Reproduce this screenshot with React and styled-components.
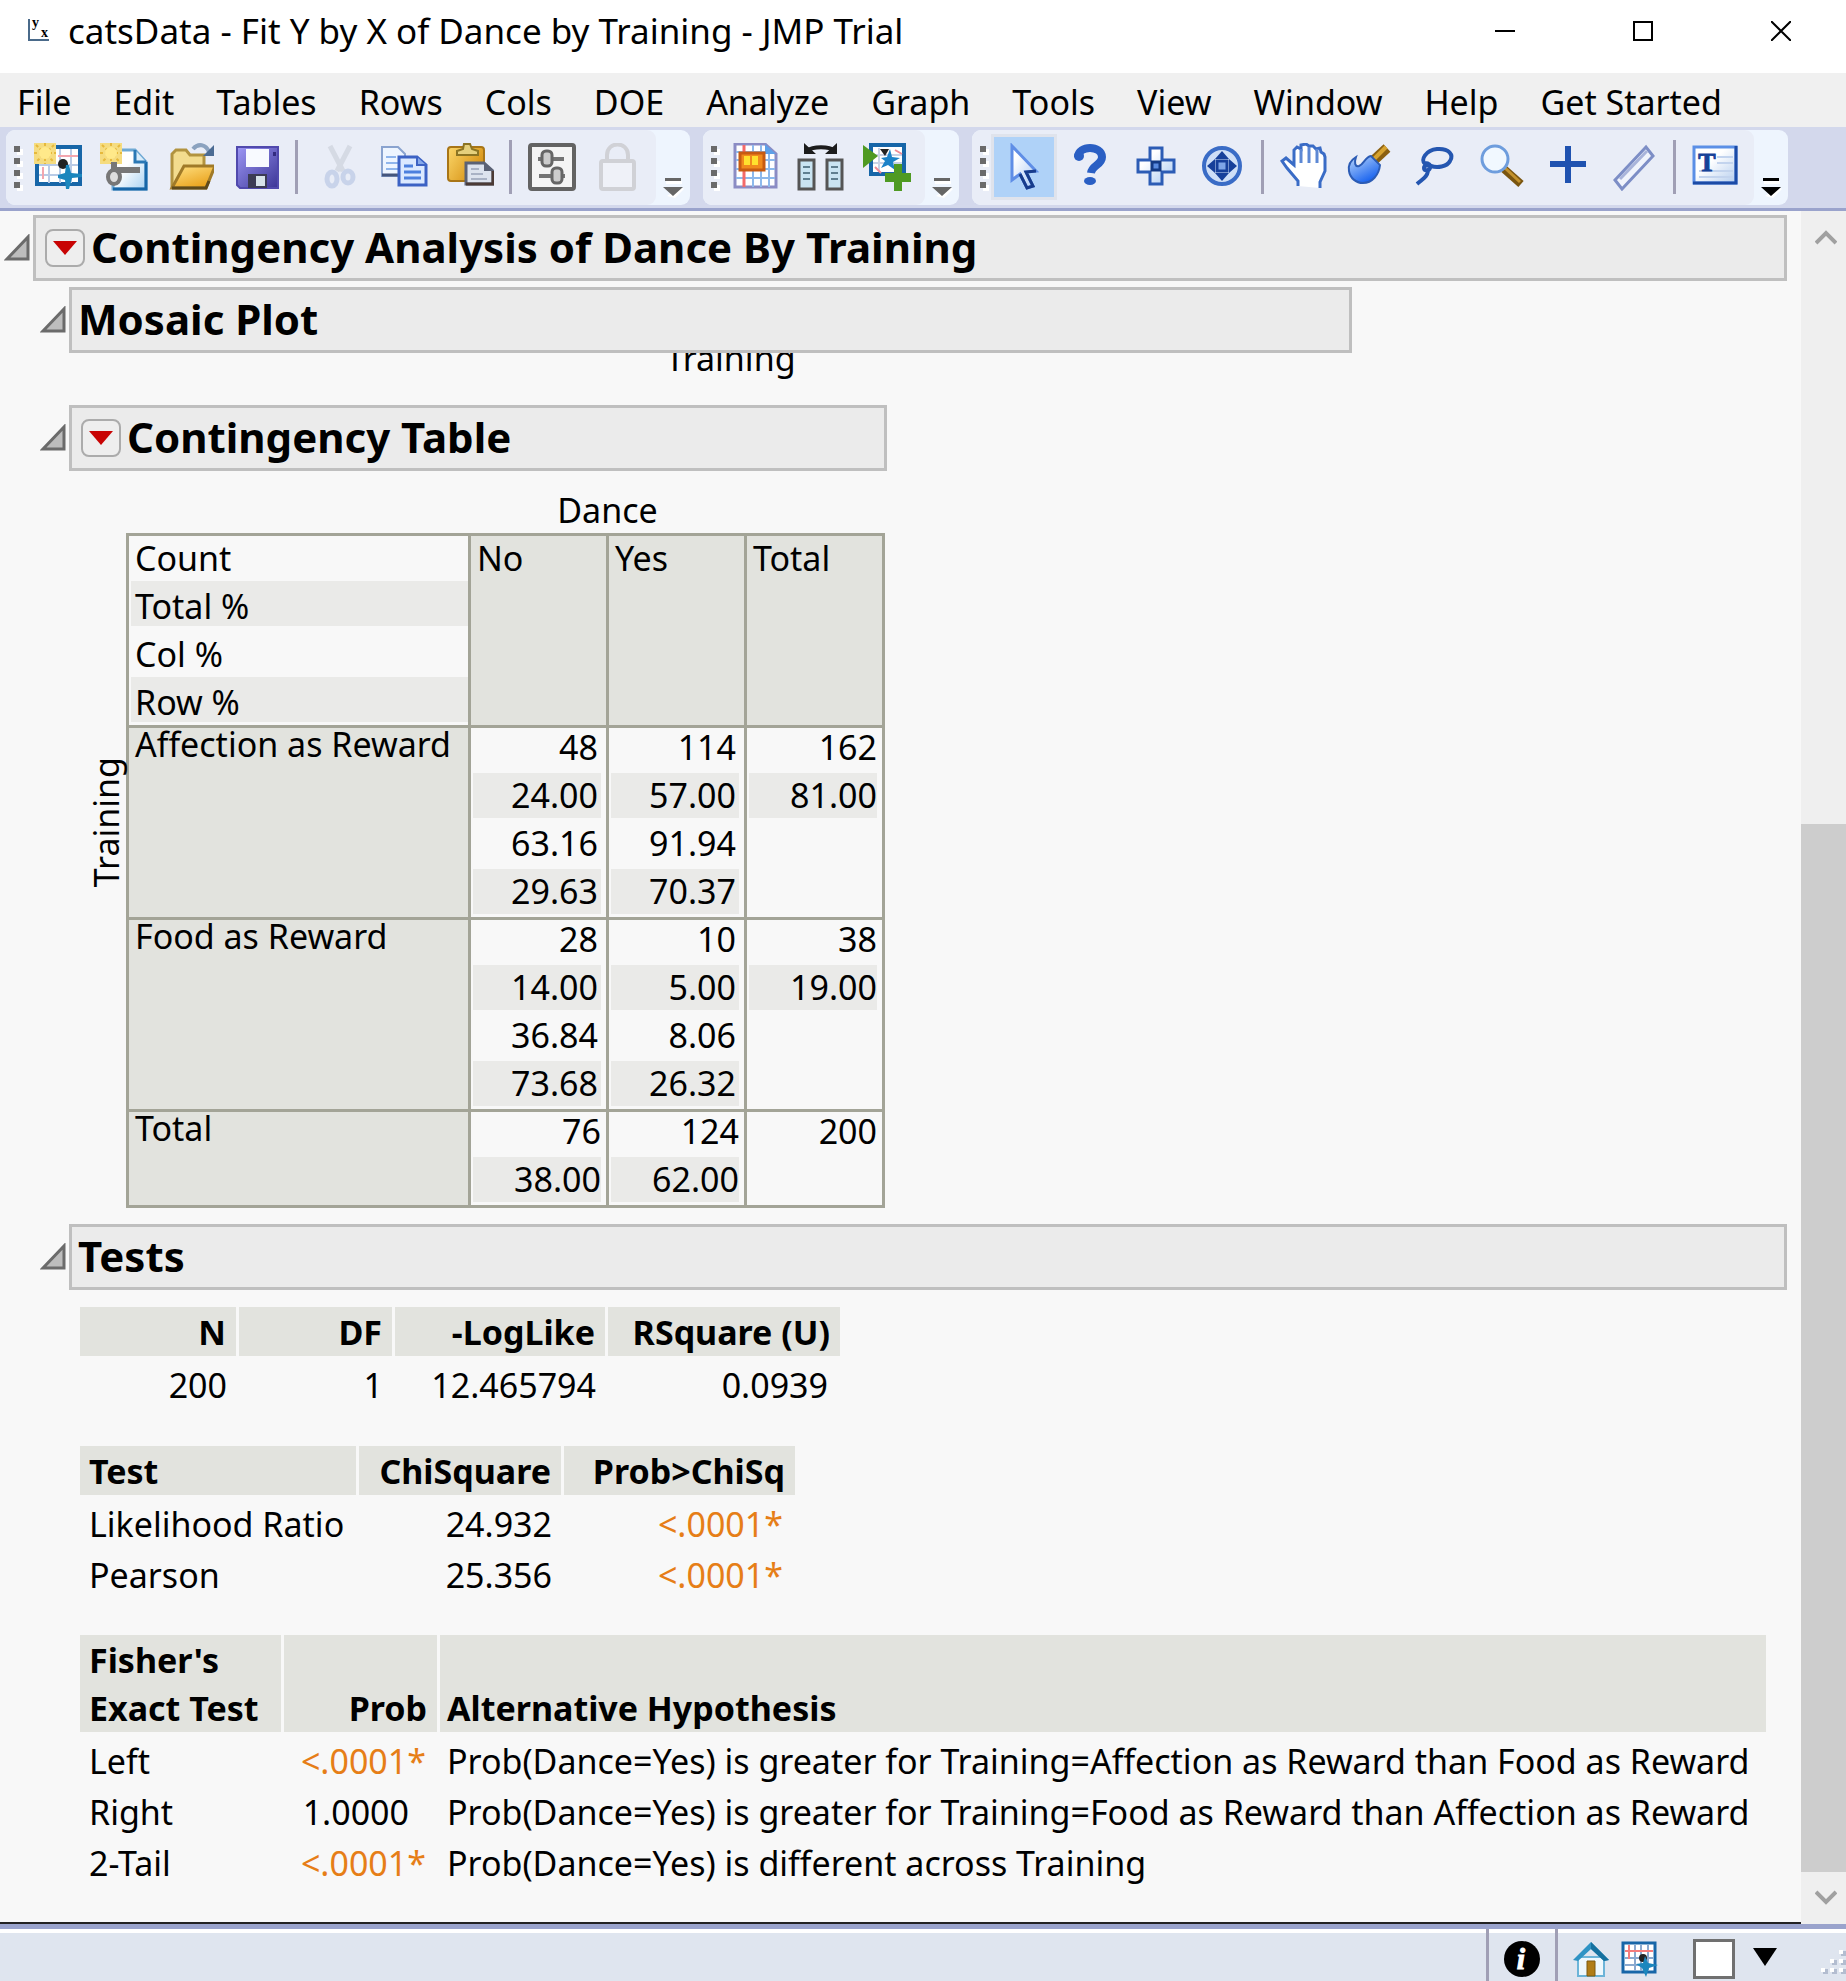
import React from "react";
import styled, { createGlobalStyle, css } from "styled-components";

const GlobalStyle = createGlobalStyle`
  *, *::before, *::after { box-sizing: border-box; }
  body { margin: 0; background: #f8f8f8; }
  button { font: inherit; color: inherit; padding: 0; border: 0; background: none; }
`;

const Window = styled.div`
  display: flex;
  flex-direction: column;
  height: 100vh;
  overflow: hidden;
  font-family: "Noto Sans", "Open Sans", sans-serif;
  font-size: 34px;
  color: #000;
  background: #f8f8f8;
`;

/* ---------- title bar ---------- */

const TitleBar = styled.header`
  display: flex;
  align-items: center;
  height: 73px;
  flex: none;
  padding: 0 0 12px 26px;
  background: #fff;
`;

const AppTitle = styled.h1`
  flex: 1;
  margin: 0 0 0 17px;
  font-size: 35px;
  line-height: 46px;
  font-weight: 400;
  white-space: nowrap;
`;

const WindowControls = styled.div`
  display: flex;
  gap: 8px;
`;

const WindowButton = styled.button`
  display: flex;
  align-items: center;
  justify-content: center;
  width: 130px;
  height: 58px;
`;

/* ---------- menu bar ---------- */

const MenuBar = styled.nav`
  display: flex;
  align-items: center;
  height: 54px;
  flex: none;
  padding-top: 4px;
  background: #f0f0f0;
`;

const MenuItem = styled.button`
  padding: 0 25px 0 17px;
  font-size: 34px;
  line-height: 46px;
  white-space: nowrap;
`;

/* ---------- toolbars ---------- */

const ToolBars = styled.div`
  display: flex;
  gap: 13px;
  height: 84px;
  flex: none;
  padding: 3px 6px;
  background: #d3d8ec;
  border-bottom: 3px solid #9aa3cc;
`;

const ToolGroup = styled.div`
  display: flex;
  height: 75px;
  overflow: hidden;
  border-radius: 9px;
  background: #eef5fe;
`;

const ToolStrip = styled.div`
  display: flex;
  align-items: center;
  padding-right: 5px;
  padding-bottom: 2px;
  border-radius: 0 9px 9px 0;
  background: #e9edf7;
`;

const Grip = styled.div`
  display: grid;
  gap: 6px;
  width: 19px;
  padding-left: 8px;
  span {
    width: 6px;
    height: 6px;
    background: #6a6a6a;
    box-shadow: 3px 3px 0 #fff;
  }
`;

const ToolButton = styled.button`
  display: flex;
  align-items: center;
  justify-content: center;
  width: 66px;
  height: 66px;
  ${(p) =>
    p.$active &&
    css`
      background: #afd2f8;
      border: 3px solid #dfe3ec;
    `}
  svg { flex: none; }
`;

const ToolDivider = styled.div`
  width: 3px;
  height: 54px;
  margin: 0 7px 0 6px;
  background: #a09fb5;
`;

const Overflow = styled.button`
  display: flex;
  align-items: flex-end;
  justify-content: center;
  width: 34px;
  height: 75px;
  padding-bottom: 6px;
`;

/* ---------- report ---------- */

const Body = styled.div`
  display: flex;
  flex: 1;
  min-height: 0;
`;

const Report = styled.main`
  flex: 1;
  min-width: 0;
  overflow: hidden;
  padding: 4px 14px 0 0;
`;

const Outline = styled.div`
  display: flex;
  align-items: center;
  gap: 1px;
  padding-left: ${(p) => (p.$nested ? 40 : 4)}px;
  margin-bottom: ${(p) => p.$gap || 0}px;
`;

const Disclosure = styled.button`
  display: flex;
  width: 28px;
  height: 28px;
`;

const OutlineBar = styled.div`
  display: flex;
  align-items: center;
  height: 66px;
  flex: ${(p) => (p.$width ? "none" : 1)};
  width: ${(p) => (p.$width ? p.$width + "px" : "auto")};
  padding: 0 0 2px ${(p) => (p.$menu ? 9 : 6)}px;
  border: 3px solid #bfbfbf;
  background: #ebebeb;
`;

const OutlineTitle = styled.h2`
  margin: 0;
  font-size: 42px;
  line-height: 56px;
  font-weight: 700;
  white-space: nowrap;
`;

const RedTriangle = styled.button`
  display: flex;
  align-items: center;
  justify-content: center;
  width: 40px;
  height: 38px;
  margin: 2px 6px 0 0;
  border: 2px solid #ababab;
  border-radius: 8px;
  background: #eee;
`;

const ScrolledPlot = styled.div`
  display: flex;
  flex-direction: column;
  justify-content: flex-end;
  width: 1283px;
  height: 52px;
  margin-left: 69px;
  padding: 0 0 24px 40px;
  overflow: hidden;
  line-height: 46px;
  text-align: center;
  span { flex: none; }
`;

const PivotArea = styled.div`
  display: flex;
  align-items: center;
  margin: 16px 0 16px 86px;
`;

const PivotSide = styled.div`
  writing-mode: vertical-rl;
  transform: rotate(180deg);
  line-height: 40px;
  margin-bottom: 50px;
`;

const Pivot = styled.table`
  width: 759px;
  table-layout: fixed;
  border-collapse: collapse;
  caption {
    padding: 0 138px 0 342px;
    line-height: 46px;
  }
  th, td {
    padding: 0;
    border: 3px solid #a3a497;
    vertical-align: top;
    font-weight: 400;
  }
  th {
    padding-left: 6px;
    text-align: left;
    background: #e2e3de;
    line-height: 32px;
    white-space: nowrap;
  }
  thead th { line-height: 44px; }
  td { text-align: right; }
`;

const Lines = styled.ul`
  list-style: none;
  margin: -3px ${(p) => (p.$key ? 0 : 5)}px 0 2px;
  padding: 0;
  text-align: ${(p) => (p.$key ? "left" : "right")};
  li {
    height: 48px;
    line-height: ${(p) => (p.$key ? 50 : 44)}px;
    padding: 0 ${(p) => (p.$flush || p.$key ? 0 : 3)}px 0 ${(p) => (p.$key ? 4 : 0)}px;
  }
  li:nth-child(even) {
    border-bottom: 3px solid transparent;
    background: #eaeae8;
    background-clip: padding-box;
  }
`;

const Stats = styled.table`
  margin: ${(p) => p.$top}px 0 0 80px;
  table-layout: fixed;
  border-collapse: separate;
  border-spacing: 0;
  th, td {
    padding: 0 10px 0 9px;
    text-align: left;
    white-space: nowrap;
  }
  th {
    padding-top: 1px;
    vertical-align: bottom;
    line-height: 48px;
    font-weight: 700;
    border-right: 3px solid #f8f8f8;
    border-bottom: 4px solid #f8f8f8;
    background: #e2e3de;
  }
  th:last-child { border-right: 0; }
  th:nth-child(3), td:nth-child(3) { padding-left: 7px; }
  td { line-height: 51px; }
`;

const Num = styled.td`
  && { text-align: right; padding-right: ${(p) => p.$pad || 12}px; }
  color: ${(p) => (p.$hot ? "#e67e17" : "inherit")};
`;

const NumHead = styled.th`
  && { text-align: right; }
`;

/* ---------- scroll bar ---------- */

const ScrollBar = styled.div`
  display: flex;
  flex-direction: column;
  width: 45px;
  flex: none;
  background: #efefef;
`;

const ScrollArrow = styled.button`
  display: flex;
  align-items: center;
  justify-content: center;
  height: 50px;
  padding: 2px 0 0 4px;
`;

const ScrollSpace = styled.div`
  flex: 563;
`;

const ScrollThumb = styled.div`
  flex: 1049;
  background: #cdcdcd;
`;

/* ---------- status bar ---------- */

const StatusBar = styled.footer`
  display: flex;
  justify-content: flex-end;
  flex: none;
  height: 57px;
  border-top: 5px solid #9aa3cc;
  background: linear-gradient(#fff 4px, #dfe5ef 4px);
`;

const ReportEdge = styled.div`
  flex: none;
  height: 2px;
  background: linear-gradient(90deg, #222 calc(100% - 45px), #efefef calc(100% - 45px));
`;

const StatusCell = styled.div`
  display: flex;
  align-items: center;
  gap: 12px;
  padding: 7px 15px 0;
  border-left: 3px solid #a09fb5;
`;

const StatusButton = styled.button`
  display: flex;
`;

const ColorBox = styled.button`
  width: 42px;
  height: 40px;
  margin-left: 22px;
  border: 3px solid #707070;
  background: #fff;
`;

const DropButton = styled.button`
  display: flex;
  margin: 0 27px 4px 6px;
`;

/* ---------- drawings ---------- */

const Svg = ({ children, size = 48, ...rest }) => (
  <svg width={size} height={size} viewBox="0 0 48 48" fill="none" aria-hidden="true" {...rest}>
    {children}
  </svg>
);

const Sun = () => (
  <g>
    <rect x="0" y="0" width="22" height="21" fill="#f5dc80" />
    <path d="M11 0v21M0 10h22M2 2l18 17M20 2L2 19" stroke="#e6b93c" strokeWidth="2" strokeDasharray="3 2" />
    <circle cx="11" cy="10" r="6" fill="#ffe98a" />
  </g>
);

const Plane = ({ x = 0, y = 0 }) => (
  <path
    transform={`translate(${x} ${y})`}
    d="M0 10l7-2 1-8h3l2 8 11 1v3l-10 1-3 11h-3l-1-9-7-2z"
    fill="#1b86bd"
  />
);

const NewTable = () => (
  <Svg>
    <rect x="3" y="4" width="43" height="37" fill="#fff" stroke="#1766a8" strokeWidth="4" />
    <path d="M5 22h39M5 32h39M15 6v34M26 6v34M37 6v34" stroke="#b9cbe6" strokeWidth="2" />
    <path d="M24 13h20M9 24v12" stroke="#f3a6ae" strokeWidth="2" />
    <Sun />
    <circle cx="29" cy="21" r="5" fill="#222" />
    <Plane x={24} y={22} />
  </Svg>
);

const NewScript = () => (
  <Svg>
    <defs>
      <linearGradient id="page" x1="0" y1="0" x2="1" y2="1">
        <stop offset="0.400" stopColor="#fff" />
        <stop offset="1" stopColor="#a9d2f2" />
      </linearGradient>
    </defs>
    <path d="M13 7h22l11 12v27H13z" fill="url(#page)" stroke="#6fa9d4" strokeWidth="3" />
    <path d="M46 19v27H13" stroke="#1766a8" strokeWidth="3" />
    <path d="M35 7v12h11" fill="#d9ecfa" stroke="#2a78b5" strokeWidth="3" />
    <Sun />
    <path d="M14 19v10M14 27h26" stroke="#777" strokeWidth="6" />
    <ellipse cx="14" cy="34" rx="6" ry="7" stroke="#777" strokeWidth="4" fill="#ddd" />
  </Svg>
);

const OpenFolder = () => (
  <Svg>
    <defs>
      <linearGradient id="flap" x1="0" y1="0" x2="0.600" y2="1">
        <stop offset="0" stopColor="#ffe285" />
        <stop offset="1" stopColor="#eaa21c" />
      </linearGradient>
    </defs>
    <path d="M6 45V11l4-4h10l4 5h14v11" fill="#f3dc8e" stroke="#b2933f" strokeWidth="3" />
    <path d="M6 45l12-22h31l-9 22z" fill="url(#flap)" stroke="#a07a28" strokeWidth="3" />
    <path d="M6 45h34l3-7" stroke="#5f4a1c" strokeWidth="3" />
    <path d="M27 6c5-6 13-5 16 3" stroke="#8ba2bf" strokeWidth="4" />
    <path d="M48 2v11H37z" fill="#4b6b93" />
  </Svg>
);

const Floppy = () => (
  <Svg>
    <defs>
      <linearGradient id="disk" x1="0" y1="0" x2="1" y2="1">
        <stop offset="0" stopColor="#9d97f5" />
        <stop offset="1" stopColor="#3b3596" />
      </linearGradient>
    </defs>
    <path d="M5 4h41v41H8l-3-3z" fill="url(#disk)" stroke="#5049ad" strokeWidth="2" />
    <path d="M14 6h23v18H14z" fill="#f8faff" />
    <path d="M16 31h19v14H16z" fill="#3c3c55" />
    <path d="M24 33h9v10h-9z" fill="#d7e3ea" />
    <path d="M41 9h3v4h-3z" fill="#332c80" />
  </Svg>
);

const Scissors = () => (
  <Svg opacity="0.500">
    <path d="M16 3l13 25M36 3L23 28" stroke="#c3c8d2" strokeWidth="5" />
    <ellipse cx="18" cy="36" rx="5" ry="7" stroke="#a9bbdf" strokeWidth="5" />
    <ellipse cx="34" cy="34" rx="5" ry="6" stroke="#a9bbdf" strokeWidth="5" />
  </Svg>
);

const Copy = () => (
  <Svg>
    <path d="M2 4h16l7 7v22H2z" fill="#eef5ff" stroke="#8aa3cf" strokeWidth="2" />
    <path d="M2 32h20" stroke="#44557c" strokeWidth="3" />
    <path d="M6 14h10M6 20h12M6 26h12" stroke="#8fb5ec" strokeWidth="2" />
    <path d="M19 14h18l9 8v20H19z" fill="#dbe9ff" stroke="#3c62c4" strokeWidth="3" />
    <path d="M37 14v8h9" fill="#86a9ea" stroke="#3c62c4" strokeWidth="2" />
    <path d="M24 23h9M24 29h17M24 35h17" stroke="#4c80de" strokeWidth="3" />
  </Svg>
);

const Paste = () => (
  <Svg>
    <defs>
      <linearGradient id="board" x1="0" y1="0" x2="1" y2="0.600">
        <stop offset="0" stopColor="#fbd76a" />
        <stop offset="1" stopColor="#d58e10" />
      </linearGradient>
    </defs>
    <rect x="2" y="4" width="36" height="34" rx="3" fill="url(#board)" stroke="#a87516" strokeWidth="2" />
    <path d="M11 12V8l6-2 1-5h6l2 5 6 2v4z" fill="#e5d07c" stroke="#8b7423" strokeWidth="2" />
    <path d="M20 20h18l9 8v13H20z" fill="#dde3ee" stroke="#5b6275" strokeWidth="3" />
    <path d="M47 28v13H20" stroke="#4b3a35" strokeWidth="3" />
    <path d="M38 20v8h9z" fill="#5b6275" />
    <path d="M25 26h8M25 31h12M25 36h16" stroke="#a9b2c5" strokeWidth="2" />
  </Svg>
);

const Panel = () => (
  <Svg>
    <rect x="2" y="2" width="44" height="44" rx="2" fill="#f4f4f4" stroke="#636363" strokeWidth="4" />
    <path d="M10 16h26M11 33h26" stroke="#747474" strokeWidth="4" />
    <rect x="14" y="8" width="10" height="15" rx="4" fill="#ccc" stroke="#666" strokeWidth="3" />
    <rect x="24" y="25" width="10" height="15" rx="4" fill="#ccc" stroke="#666" strokeWidth="3" />
  </Svg>
);

const Lock = () => (
  <Svg>
    <path d="M13 18v-6c0-14 21-14 21 0v6" stroke="#d0d1d6" strokeWidth="4" />
    <rect x="7" y="18" width="33" height="28" rx="2" fill="#eff1f8" stroke="#d0d1d6" strokeWidth="4" />
  </Svg>
);

const GridSheet = () => (
  <Svg>
    <path d="M4 1h30l11 10v33H4z" fill="#fff" stroke="#8b8cc4" strokeWidth="3" />
    <path d="M5 9h30M5 17h39M5 26h39M5 35h39M22 2v42M30 2v42M38 8v36" stroke="#8db9ec" strokeWidth="2" />
    <path d="M13 2v42" stroke="#f46a6a" strokeWidth="3" />
    <path d="M34 1v10h11z" fill="#5ea0e8" />
    <rect x="9" y="10" width="24" height="17" fill="#f08a1d" stroke="#c75b12" strokeWidth="3" />
    <rect x="13" y="13" width="14" height="9" fill="#ffe12e" />
    <path d="M20 12v12" stroke="#f08a1d" strokeWidth="2" />
  </Svg>
);

const JoinColumns = () => (
  <Svg>
    <path d="M2 17h15v29H2zM30 17h15v29H30z" fill="#c9e4f2" stroke="#555" strokeWidth="3" />
    <path d="M6 24h7M6 30h7M6 36h7M34 24h7M34 30h7M34 36h7" stroke="#5f7f90" strokeWidth="2" />
    <path d="M10 8c6-5 22-5 28 0" stroke="#1c1c1c" strokeWidth="4" />
    <path d="M7 0v11h12zM40 0v11H28z" fill="#1c1c1c" />
  </Svg>
);

const GraphPlus = () => (
  <Svg>
    <path d="M8 2h33v29H8z" fill="#fff" stroke="#1766a8" strokeWidth="4" />
    <path d="M16 5v24M10 12h29M10 20h29" stroke="#c9d3e6" strokeWidth="2" />
    <path d="M12 24l6 6M32 7l7 4" stroke="#f08c96" strokeWidth="2" />
    <path d="M17 6h9l-4 7z" fill="#222" />
    <path d="M27 6l2 8 8 1-7 4 2 8-7-5-7 3 4-7-4-3 6-1z" fill="#1c82c8" />
    <path d="M0 2l15 11L0 25z" fill="#4f9a22" />
    <path d="M31 21h8v9h9v9h-9v9h-8v-9h-9v-9h9z" fill="#4f9a22" />
  </Svg>
);

const Pointer = () => (
  <Svg>
    <defs>
      <linearGradient id="arrow" x1="0" y1="0" x2="1" y2="1">
        <stop offset="0.200" stopColor="#fff" />
        <stop offset="1" stopColor="#a9c8f5" />
      </linearGradient>
    </defs>
    <path d="M12 3l24 25-10 1 7 14-6 2-7-14-8 6z" fill="url(#arrow)" stroke="#5f8ee6" strokeWidth="3" />
    <path d="M36 28l-10 1 7 14-6 2-7-14" stroke="#173c8c" strokeWidth="3" />
  </Svg>
);

const Help = () => (
  <Svg>
    <path d="M12 14c0-12 24-12 24 0 0 8-10 8-11 16" stroke="#2a5fc4" strokeWidth="8" />
    <circle cx="13" cy="13" r="5" fill="#2a5fc4" />
    <ellipse cx="24" cy="38" rx="6" ry="4" fill="#2a5fc4" />
  </Svg>
);

const CrossTool = () => (
  <Svg>
    <defs>
      <linearGradient id="cross" x1="0" y1="0" x2="1" y2="1">
        <stop offset="0.300" stopColor="#fff" />
        <stop offset="1" stopColor="#a8c9f2" />
      </linearGradient>
    </defs>
    <path d="M18 5h12v12h12v12H30v12H18V29H6V17h12z" fill="url(#cross)" stroke="#2c5cb5" strokeWidth="3" />
    <rect x="20" y="19" width="8" height="8" fill="#5a8be0" stroke="#143a85" strokeWidth="3" />
  </Svg>
);

const Target = () => (
  <Svg>
    <circle cx="24" cy="23" r="18" fill="#cfdff7" stroke="#3a6cc6" strokeWidth="4" />
    <path d="M24 8l7 8H17zM24 38l7-8H17zM9 23l8-7v14zM39 23l-8-7v14z" fill="#17409a" />
    <rect x="19" y="18" width="10" height="10" fill="#7ea5e6" stroke="#17409a" strokeWidth="3" />
  </Svg>
);

const Hand = () => (
  <Svg>
    <path
      d="M17 42v-5L6 24l-5-7 4-3 8 7V6l3-3 4 2V1l5-1 3 2h4l3 3 4-1 1 4 3 2 1 3v14l-5 11v6"
      transform="translate(1 1)"
      fill="#fff"
      stroke="#3a6cc6"
      strokeWidth="3"
    />
    <path d="M21 6v14M29 4v16M37 6v14" stroke="#5d88d4" strokeWidth="3" />
  </Svg>
);

const Brush = () => (
  <Svg>
    <defs>
      <linearGradient id="bristle" x1="0" y1="0" x2="0.600" y2="1">
        <stop offset="0" stopColor="#bcd8fb" />
        <stop offset="1" stopColor="#1560ee" />
      </linearGradient>
    </defs>
    <path d="M27 18L41 5" stroke="#8b6010" strokeWidth="10" />
    <path d="M28 16L40 4" stroke="#d7a32f" strokeWidth="4" />
    <path d="M10 14c-5 3-8 8-7 14 1 7 7 12 14 12 9 0 16-8 17-18l-9-9c-6 1-7 8-12 10-4 1-5-3-3-9z" fill="url(#bristle)" stroke="#2c5cb5" strokeWidth="2" />
  </Svg>
);

const Lasso = () => (
  <Svg>
    <path d="M13 21c-5-4 1-14 12-15 12-1 17 6 13 12-3 6-13 7-19 5-3-1-7-1-7 2s5 3 6 0-1-5-5-5M16 28c-1 6-4 7-11 13" stroke="#2456b0" strokeWidth="4" />
  </Svg>
);

const Magnifier = () => (
  <Svg>
    <path d="M26 26l17 15" stroke="#7a5510" strokeWidth="8" />
    <path d="M27 25l15 14" stroke="#c4922c" strokeWidth="3" />
    <circle cx="17" cy="16" r="13" fill="#f1f8ff" stroke="#6e9ddd" strokeWidth="3" />
  </Svg>
);

const Plus = () => (
  <Svg>
    <path d="M24 3v37M6 21h36" stroke="#1f52b0" strokeWidth="6" />
  </Svg>
);

const Ruler = () => (
  <Svg>
    <path d="M5 37L36 4l7 9-31 33z" fill="#f1f4fc" stroke="#7d8ec6" strokeWidth="3" />
    <path d="M10 36L37 8" stroke="#a9b4da" strokeWidth="3" />
  </Svg>
);

const TextTool = () => (
  <Svg>
    <defs>
      <linearGradient id="note" x1="0" y1="0" x2="1" y2="1">
        <stop offset="0.400" stopColor="#fff" />
        <stop offset="1" stopColor="#b4cdee" />
      </linearGradient>
    </defs>
    <rect x="2" y="4" width="42" height="36" fill="url(#note)" stroke="#5b8fe6" strokeWidth="3" />
    <path d="M44 3v37H1" stroke="#1c4ba6" strokeWidth="3" />
    <path d="M25 14h16M25 20h16M7 28h34M7 34h34" stroke="#c3d4ee" strokeWidth="2" />
    <text x="15" y="28" textAnchor="middle" fontFamily="Liberation Serif, serif" fontWeight="700" fontSize="26" fill="#174297" stroke="#174297">T</text>
  </Svg>
);

const Chevron = ({ down }) => (
  <svg width="22" height="16" viewBox="0 0 22 16" fill="none" aria-hidden="true">
    <path d={down ? "M1 2l10 10L21 2" : "M1 14L11 4l10 10"} stroke="#a0a0a0" strokeWidth="4" />
  </svg>
);

const OverflowMark = ({ dark }) => (
  <svg width="22" height="24" viewBox="0 0 22 24" aria-hidden="true">
    <path d="M4 6h16v3H4zM5 21l14-9 3 2-9 9z" fill="#fff" />
    <path d="M3 3h16v3H3zM1 12h20l-10 9z" fill={dark ? "#000" : "#666"} />
  </svg>
);

const AppIcon = () => (
  <svg width="25" height="26" viewBox="0 0 25 26" overflow="visible" aria-hidden="true">
    <path d="M3 1v21h20" fill="none" stroke="#4a6a8a" strokeWidth="2" />
    <text x="6" y="9" fontFamily="Liberation Serif, serif" fontWeight="700" fontSize="14">y</text>
    <text x="15" y="19" fontFamily="Liberation Serif, serif" fontWeight="700" fontSize="14">x</text>
  </svg>
);

const InfoIcon = () => (
  <svg width="36" height="36" viewBox="0 0 36 36" aria-hidden="true">
    <circle cx="18" cy="18" r="18" fill="#000" />
    <text x="17" y="28" textAnchor="middle" fontFamily="Liberation Serif, serif" fontWeight="700" fontStyle="italic" fontSize="30" fill="#fff" stroke="#fff">i</text>
  </svg>
);

const HomeIcon = () => (
  <svg width="36" height="36" viewBox="0 0 36 36" aria-hidden="true">
    <path d="M5 16h26v19H5z" fill="#eef8fd" stroke="#6cb4d8" strokeWidth="2" />
    <path d="M0 19L18 1l18 18-5 1-13-12L5 20z" fill="#2f93c4" />
    <path d="M18 1l18 18-5 1-13-12z" fill="#16719f" />
    <path d="M14 20h8v15h-8z" fill="#b07d16" stroke="#7d5a10" />
  </svg>
);

const TableIcon = () => (
  <svg width="38" height="38" viewBox="0 0 38 38" fill="none" aria-hidden="true">
    <rect x="2" y="3" width="32" height="29" fill="#fff" stroke="#1766a8" strokeWidth="3" />
    <path d="M4 18h28M4 25h28M14 5v26M20 5v26M27 5v26" stroke="#8aa9cf" strokeWidth="2" />
    <path d="M4 11h28M8 5v14" stroke="#f47c7c" strokeWidth="2" />
    <circle cx="22" cy="18" r="4" fill="#222" />
    <path d="M15 24l7-1 2-7 3 7 10 2-9 3-3 9-4-9z" fill="#1b86bd" />
  </svg>
);

const ResizeGrip = () => (
  <svg width="27" height="49" viewBox="0 0 27 49" aria-hidden="true">
    {[[2, 2], [1, 3], [2, 3], [0, 4], [1, 4], [2, 4]].map(([c, r]) => (
      <g key={`${c}-${r}`}>
        <rect x={c * 9 + 4} y={r * 9 + 4} width="5" height="5" fill="#b3bdd0" />
        <rect x={c * 9 + 2} y={r * 9 + 3} width="4" height="4" fill="#fff" />
      </g>
    ))}
  </svg>
);

/* ---------- data ---------- */

const menus = ["File", "Edit", "Tables", "Rows", "Cols", "DOE", "Analyze", "Graph", "Tools", "View", "Window", "Help", "Get Started"];

const toolGroups = [
  [["New Data Table", NewTable], ["New Script", NewScript], ["Open", OpenFolder], ["Save", Floppy], null,
    ["Cut", Scissors], ["Copy", Copy], ["Paste", Paste], null, ["Preferences", Panel], ["Lock", Lock]],
  [["Distribution", GridSheet], ["Fit Y by X", JoinColumns], ["Add Graph", GraphPlus]],
  [["Arrow", Pointer], ["Help", Help], ["Selection", CrossTool], ["Scroller", Target], null,
    ["Grabber", Hand], ["Brush", Brush], ["Lasso", Lasso], ["Magnifier", Magnifier], ["Crosshairs", Plus], ["Ruler", Ruler], null,
    ["Annotate", TextTool]],
];

const pivotRows = [
  { label: "Affection as Reward", cells: [["48", "24.00", "63.16", "29.63"], ["114", "57.00", "91.94", "70.37"], ["162", "81.00"]] },
  { label: "Food as Reward", cells: [["28", "14.00", "36.84", "73.68"], ["10", "5.00", "8.06", "26.32"], ["38", "19.00"]] },
  { label: "Total", cells: [["76", "38.00"], ["124", "62.00"], ["200"]] },
];

const fisherRows = [
  ["Left", "<.0001*", "Prob(Dance=Yes) is greater for Training=Affection as Reward than Food as Reward"],
  ["Right", "1.0000", "Prob(Dance=Yes) is greater for Training=Food as Reward than Affection as Reward"],
  ["2-Tail", "<.0001*", "Prob(Dance=Yes) is different across Training"],
];

function Heading({ title, nested, menu, width, gap }) {
  return (
    <Outline $nested={nested} $gap={gap}>
      <Disclosure aria-label={`Toggle ${title}`}>
        <svg width="28" height="28" viewBox="0 0 28 28" aria-hidden="true">
          <path d="M24 3v22H3z" fill="#bdbdbd" stroke="#6b6b6b" strokeWidth="3" />
        </svg>
      </Disclosure>
      <OutlineBar $width={width} $menu={menu}>
        {menu && (
          <RedTriangle aria-label={`${title} options`}>
            <svg width="24" height="16" viewBox="0 0 24 16" aria-hidden="true">
              <path d="M0 1h24L12 15z" fill="#c80404" />
            </svg>
          </RedTriangle>
        )}
        <OutlineTitle>{title}</OutlineTitle>
      </OutlineBar>
    </Outline>
  );
}

function Cols({ widths }) {
  return (
    <colgroup>
      {widths.map((w, i) => (
        <col key={i} width={w} />
      ))}
    </colgroup>
  );
}

export default function App() {
  return (
    <Window>
      <GlobalStyle />
      <TitleBar>
        <AppIcon />
        <AppTitle>catsData - Fit Y by X of Dance by Training - JMP Trial</AppTitle>
        <WindowControls>
          <WindowButton aria-label="Minimize">
            <svg width="20" height="20" viewBox="0 0 20 20"><path d="M0 9h20v2H0z" /></svg>
          </WindowButton>
          <WindowButton aria-label="Maximize">
            <svg width="20" height="20" viewBox="0 0 20 20" fill="none"><path d="M1 1h18v18H1z" stroke="#000" strokeWidth="2" /></svg>
          </WindowButton>
          <WindowButton aria-label="Close">
            <svg width="20" height="20" viewBox="0 0 20 20"><path d="M0 0l20 20M20 0L0 20" stroke="#000" strokeWidth="2" /></svg>
          </WindowButton>
        </WindowControls>
      </TitleBar>

      <MenuBar>
        {menus.map((m) => (
          <MenuItem key={m}>{m}</MenuItem>
        ))}
      </MenuBar>

      <ToolBars>
        {toolGroups.map((group, g) => (
          <ToolGroup key={g} role="toolbar">
            <ToolStrip>
              <Grip><span /><span /><span /><span /></Grip>
              {group.map((item, i) => {
                if (!item) return <ToolDivider key={i} />;
                const [label, Icon] = item;
                return (
                  <ToolButton key={i} aria-label={label} $active={label === "Arrow"}>
                    <Icon />
                  </ToolButton>
                );
              })}
            </ToolStrip>
            <Overflow aria-label="More buttons">
              <OverflowMark dark={g === 2} />
            </Overflow>
          </ToolGroup>
        ))}
      </ToolBars>

      <Body>
        <Report>
          <Heading title="Contingency Analysis of Dance By Training" menu gap={6} />
          <Heading title="Mosaic Plot" nested width={1283} />
          <ScrolledPlot><span>Training</span></ScrolledPlot>

          <Heading title="Contingency Table" nested menu width={818} />
          <PivotArea>
            <PivotSide>Training</PivotSide>
            <Pivot>
              <caption>Dance</caption>
              <Cols widths={[342, 138, 138, 138]} />
              <thead>
                <tr>
                  <td>
                    <Lines $key>
                      <li>Count</li>
                      <li>Total %</li>
                      <li>Col %</li>
                      <li>Row %</li>
                    </Lines>
                  </td>
                  <th scope="col">No</th>
                  <th scope="col">Yes</th>
                  <th scope="col">Total</th>
                </tr>
              </thead>
              <tbody>
                {pivotRows.map((row) => (
                  <tr key={row.label}>
                    <th scope="row">{row.label}</th>
                    {row.cells.map((values, c) => (
                      <td key={c}>
                        <Lines $flush={c === 2 || row.label === "Total"}>
                          {values.map((v) => (
                            <li key={v}>{v}</li>
                          ))}
                        </Lines>
                      </td>
                    ))}
                  </tr>
                ))}
              </tbody>
            </Pivot>
          </PivotArea>

          <Heading title="Tests" nested />
          <Stats $top={17}>
            <Cols widths={[159, 156, 213, 232]} />
            <thead>
              <tr>
                <NumHead>N</NumHead>
                <NumHead>DF</NumHead>
                <NumHead>-LogLike</NumHead>
                <NumHead>RSquare (U)</NumHead>
              </tr>
            </thead>
            <tbody>
              <tr>
                <Num>200</Num>
                <Num>1</Num>
                <Num>12.465794</Num>
                <Num>0.0939</Num>
              </tr>
            </tbody>
          </Stats>
          <Stats $top={35}>
            <Cols widths={[279, 205, 231]} />
            <thead>
              <tr>
                <th>Test</th>
                <NumHead>ChiSquare</NumHead>
                <NumHead>Prob&gt;ChiSq</NumHead>
              </tr>
            </thead>
            <tbody>
              <tr>
                <td>Likelihood Ratio</td>
                <Num>24.932</Num>
                <Num $hot>&lt;.0001*</Num>
              </tr>
              <tr>
                <td>Pearson</td>
                <Num>25.356</Num>
                <Num $hot>&lt;.0001*</Num>
              </tr>
            </tbody>
          </Stats>
          <Stats $top={34}>
            <Cols widths={[204, 156, 1326]} />
            <thead>
              <tr>
                <th>Fisher's<br />Exact Test</th>
                <NumHead>Prob</NumHead>
                <th>Alternative Hypothesis</th>
              </tr>
            </thead>
            <tbody>
              {fisherRows.map(([side, prob, text]) => (
                <tr key={side}>
                  <td>{side}</td>
                  <Num $hot={prob.endsWith("*")} $pad={prob.endsWith("*") ? 14 : 31}>{prob}</Num>
                  <td>{text}</td>
                </tr>
              ))}
            </tbody>
          </Stats>
        </Report>
        <ScrollBar>
          <ScrollArrow aria-label="Scroll up"><Chevron /></ScrollArrow>
          <ScrollSpace />
          <ScrollThumb />
          <ScrollArrow aria-label="Scroll down"><Chevron down /></ScrollArrow>
        </ScrollBar>
      </Body>

      <ReportEdge />
      <StatusBar>
        <StatusCell>
          <StatusButton aria-label="Information"><InfoIcon /></StatusButton>
        </StatusCell>
        <StatusCell>
          <StatusButton aria-label="Home window"><HomeIcon /></StatusButton>
          <StatusButton aria-label="Data table"><TableIcon /></StatusButton>
          <ColorBox aria-label="Row color" />
          <DropButton aria-label="Row color menu">
            <svg width="24" height="18" viewBox="0 0 24 18"><path d="M0 0h24L12 18z" /></svg>
          </DropButton>
        </StatusCell>
        <ResizeGrip />
      </StatusBar>
    </Window>
  );
}
